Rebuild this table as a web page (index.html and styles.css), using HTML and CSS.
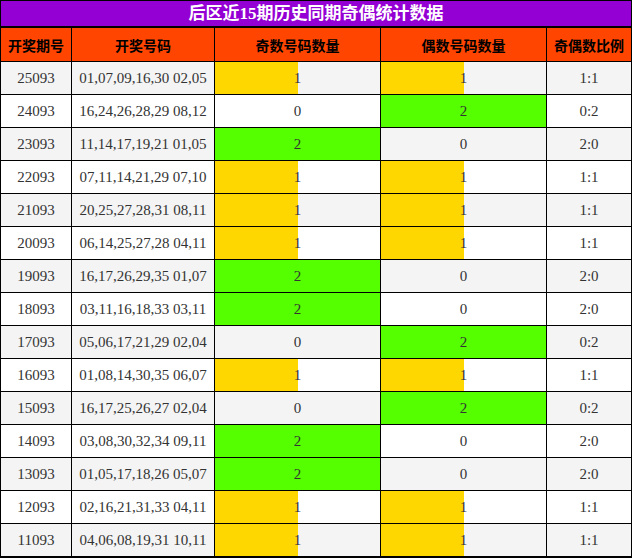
FILE: index.html
```html
<!DOCTYPE html>
<html lang="zh">
<head>
<meta charset="utf-8">
<title>后区近15期历史同期奇偶统计数据</title>
<link rel="stylesheet" href="styles.css">
</head>
<body>
<div class="board">
  <div class="title">后区近15期历史同期奇偶统计数据</div>
  <div class="grid">
    <div class="hd">开奖期号</div><div class="hd">开奖号码</div><div class="hd">奇数号码数量</div><div class="hd">偶数号码数量</div><div class="hd">奇偶数比例</div>

    <div class="c alt">25093</div><div class="c alt">01,07,09,16,30 02,05</div><div class="c alt half">1</div><div class="c alt half">1</div><div class="c alt">1:1</div>
    <div class="c">24093</div><div class="c">16,24,26,28,29 08,12</div><div class="c">0</div><div class="c full">2</div><div class="c">0:2</div>
    <div class="c alt">23093</div><div class="c alt">11,14,17,19,21 01,05</div><div class="c alt full">2</div><div class="c alt">0</div><div class="c alt">2:0</div>
    <div class="c">22093</div><div class="c">07,11,14,21,29 07,10</div><div class="c half">1</div><div class="c half">1</div><div class="c">1:1</div>
    <div class="c alt">21093</div><div class="c alt">20,25,27,28,31 08,11</div><div class="c alt half">1</div><div class="c alt half">1</div><div class="c alt">1:1</div>
    <div class="c">20093</div><div class="c">06,14,25,27,28 04,11</div><div class="c half">1</div><div class="c half">1</div><div class="c">1:1</div>
    <div class="c alt">19093</div><div class="c alt">16,17,26,29,35 01,07</div><div class="c alt full">2</div><div class="c alt">0</div><div class="c alt">2:0</div>
    <div class="c">18093</div><div class="c">03,11,16,18,33 03,11</div><div class="c full">2</div><div class="c">0</div><div class="c">2:0</div>
    <div class="c alt">17093</div><div class="c alt">05,06,17,21,29 02,04</div><div class="c alt">0</div><div class="c alt full">2</div><div class="c alt">0:2</div>
    <div class="c">16093</div><div class="c">01,08,14,30,35 06,07</div><div class="c half">1</div><div class="c half">1</div><div class="c">1:1</div>
    <div class="c alt">15093</div><div class="c alt">16,17,25,26,27 02,04</div><div class="c alt">0</div><div class="c alt full">2</div><div class="c alt">0:2</div>
    <div class="c">14093</div><div class="c">03,08,30,32,34 09,11</div><div class="c full">2</div><div class="c">0</div><div class="c">2:0</div>
    <div class="c alt">13093</div><div class="c alt">01,05,17,18,26 05,07</div><div class="c alt full">2</div><div class="c alt">0</div><div class="c alt">2:0</div>
    <div class="c">12093</div><div class="c">02,16,21,31,33 04,11</div><div class="c half">1</div><div class="c half">1</div><div class="c">1:1</div>
    <div class="c alt">11093</div><div class="c alt">04,06,08,19,31 10,11</div><div class="c alt half">1</div><div class="c alt half">1</div><div class="c alt">1:1</div>
  </div>
</div>
</body>
</html>
```

FILE: styles.css
```css
html, body {
  margin: 0;
  padding: 0;
  background: #ffffff;
}

.board {
  width: 632px;
  box-sizing: border-box;
  border: 1px solid #000;
  border-bottom-width: 2px;
  background: #000;
}

.title {
  height: 25px;
  line-height: 26px;
  margin-bottom: 2px;
  background: #9400d3;
  color: #ffffff;
  text-align: center;
  font-family: "Liberation Serif", "Noto Sans CJK SC", serif;
  font-weight: bold;
  font-size: 17px;
}

.grid {
  display: grid;
  grid-template-columns: 70px 142px 165px 165px 84px;
  grid-template-rows: 33px repeat(15, 32px);
  gap: 1px;
}

.hd {
  background: #ff4500;
  color: #000;
  display: flex;
  align-items: center;
  justify-content: center;
  font-family: "Noto Sans CJK SC", sans-serif;
  font-weight: bold;
  font-size: 14px;
}

.c {
  background: #ffffff;
  color: #333;
  display: flex;
  align-items: center;
  justify-content: center;
  font-family: "Liberation Serif", serif;
  font-size: 15px;
}

.c.alt {
  background: #f4f4f4;
}

.c.half {
  background: linear-gradient(to right, #ffd700 50%, #ffffff 50%);
}

.c.alt.half {
  background: linear-gradient(to right, #ffd700 50%, #f4f4f4 50%);
}

.c.full {
  background: #55ff00;
}
```
